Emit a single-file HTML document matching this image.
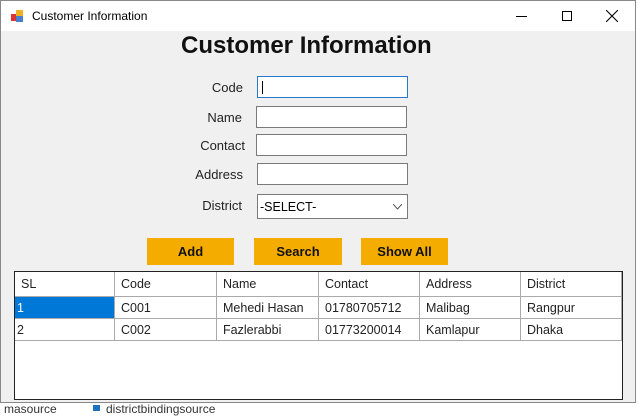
<!DOCTYPE html>
<html><head><style>
*{box-sizing:border-box;margin:0;padding:0}
body{width:638px;height:411px;background:#fff;position:relative;overflow:hidden;font-family:"Liberation Sans",sans-serif;}
.win{position:absolute;left:0;top:0;width:636px;height:403px;border:1px solid #888;background:#f0f0f0}
.tb{position:absolute;left:0;top:0;width:100%;height:30px;background:#fff;font-size:12px;color:#000}
.a{position:absolute}
.lbl{position:absolute;font-size:13px;color:#222;text-align:right;width:80px}
.in{position:absolute;background:#fff;border:1px solid #7a7a7a;width:151px;height:22px}
.btn{position:absolute;top:237px;height:27px;width:87px;background:#f5ac00;font-weight:bold;font-size:13px;text-align:center;line-height:27px;color:#111}
.grid{position:absolute;left:13px;top:270px;width:609px;height:129px;border:1px solid #222;background:#fff}
.c{position:absolute;font-size:12.5px;color:#222;border-right:1px solid #aaa;border-bottom:1px solid #aaa;padding-left:6px;line-height:22px}
</style></head><body>
<div class="win">
<div class="tb">
<svg class="a" style="left:10px;top:9px" width="13" height="13"><rect x="0" y="4" width="6" height="7" fill="#d33"/><rect x="5" y="0" width="7" height="6" fill="#f0b020"/><rect x="5" y="6" width="7" height="6" fill="#4a7fd0"/></svg>
<div class="a" style="left:31px;top:8px">Customer Information</div>
<div class="a" style="left:515px;top:15px;width:11px;height:1px;background:#000"></div>
<div class="a" style="left:561px;top:10px;width:10px;height:10px;border:1px solid #000"></div>
<svg class="a" style="left:605px;top:9px" width="12" height="12"><path d="M0 0L12 12M12 0L0 12" stroke="#000" stroke-width="1.1"/></svg>
</div>
<div class="a" style="left:180px;top:31px;width:250px;text-align:center;font-size:24px;font-weight:bold;color:#111;white-space:nowrap">Customer Information</div>
<div class="lbl" style="left:162px;top:79px">Code</div>
<div class="lbl" style="left:161px;top:109px">Name</div>
<div class="lbl" style="left:164px;top:137px">Contact</div>
<div class="lbl" style="left:162px;top:166px">Address</div>
<div class="lbl" style="left:161px;top:197px">District</div>
<div class="in" style="left:256px;top:75px;border-color:#2a78c8"><div class="a" style="left:4px;top:4px;width:1px;height:13px;background:#000"></div></div>
<div class="in" style="left:255px;top:105px"></div>
<div class="in" style="left:255px;top:133px"></div>
<div class="in" style="left:256px;top:162px"></div>
<div class="in" style="left:256px;top:193px;height:25px;font-size:12.5px;padding:5px 2px">-SELECT-<svg class="a" style="right:5px;top:9px" width="9" height="6"><path d="M0 0L4.5 5L9 0" fill="none" stroke="#555"/></svg></div>
<div class="btn" style="left:146px">Add</div>
<div class="btn" style="left:253px;width:88px">Search</div>
<div class="btn" style="left:360px">Show All</div>
<div class="grid">
<div class="c" style="left:0;top:0;width:100px;height:25px;line-height:25px">SL</div>
<div class="c" style="left:100px;top:0;width:102px;height:25px;line-height:25px">Code</div>
<div class="c" style="left:202px;top:0;width:102px;height:25px;line-height:25px">Name</div>
<div class="c" style="left:304px;top:0;width:101px;height:25px;line-height:25px">Contact</div>
<div class="c" style="left:405px;top:0;width:101px;height:25px;line-height:25px">Address</div>
<div class="c" style="left:506px;top:0;width:101px;height:25px;line-height:25px">District</div>
<div class="c" style="left:0;top:25px;width:100px;height:22px;background:#0078d7;color:#fff;padding-left:2px">1</div>
<div class="c" style="left:100px;top:25px;width:102px;height:22px">C001</div>
<div class="c" style="left:202px;top:25px;width:102px;height:22px">Mehedi Hasan</div>
<div class="c" style="left:304px;top:25px;width:101px;height:22px">01780705712</div>
<div class="c" style="left:405px;top:25px;width:101px;height:22px">Malibag</div>
<div class="c" style="left:506px;top:25px;width:101px;height:22px">Rangpur</div>
<div class="c" style="left:0;top:47px;width:100px;height:22px;padding-left:2px">2</div>
<div class="c" style="left:100px;top:47px;width:102px;height:22px">C002</div>
<div class="c" style="left:202px;top:47px;width:102px;height:22px">Fazlerabbi</div>
<div class="c" style="left:304px;top:47px;width:101px;height:22px">01773200014</div>
<div class="c" style="left:405px;top:47px;width:101px;height:22px">Kamlapur</div>
<div class="c" style="left:506px;top:47px;width:101px;height:22px">Dhaka</div>
</div>
</div>
<div class="a" style="left:4px;top:402px;font-size:12px;color:#333">masource</div>
<div class="a" style="left:93px;top:405px;width:7px;height:6px;background:#1e73be"></div>
<div class="a" style="left:106px;top:402px;font-size:12px;color:#333">districtbindingsource</div>
</body></html>
